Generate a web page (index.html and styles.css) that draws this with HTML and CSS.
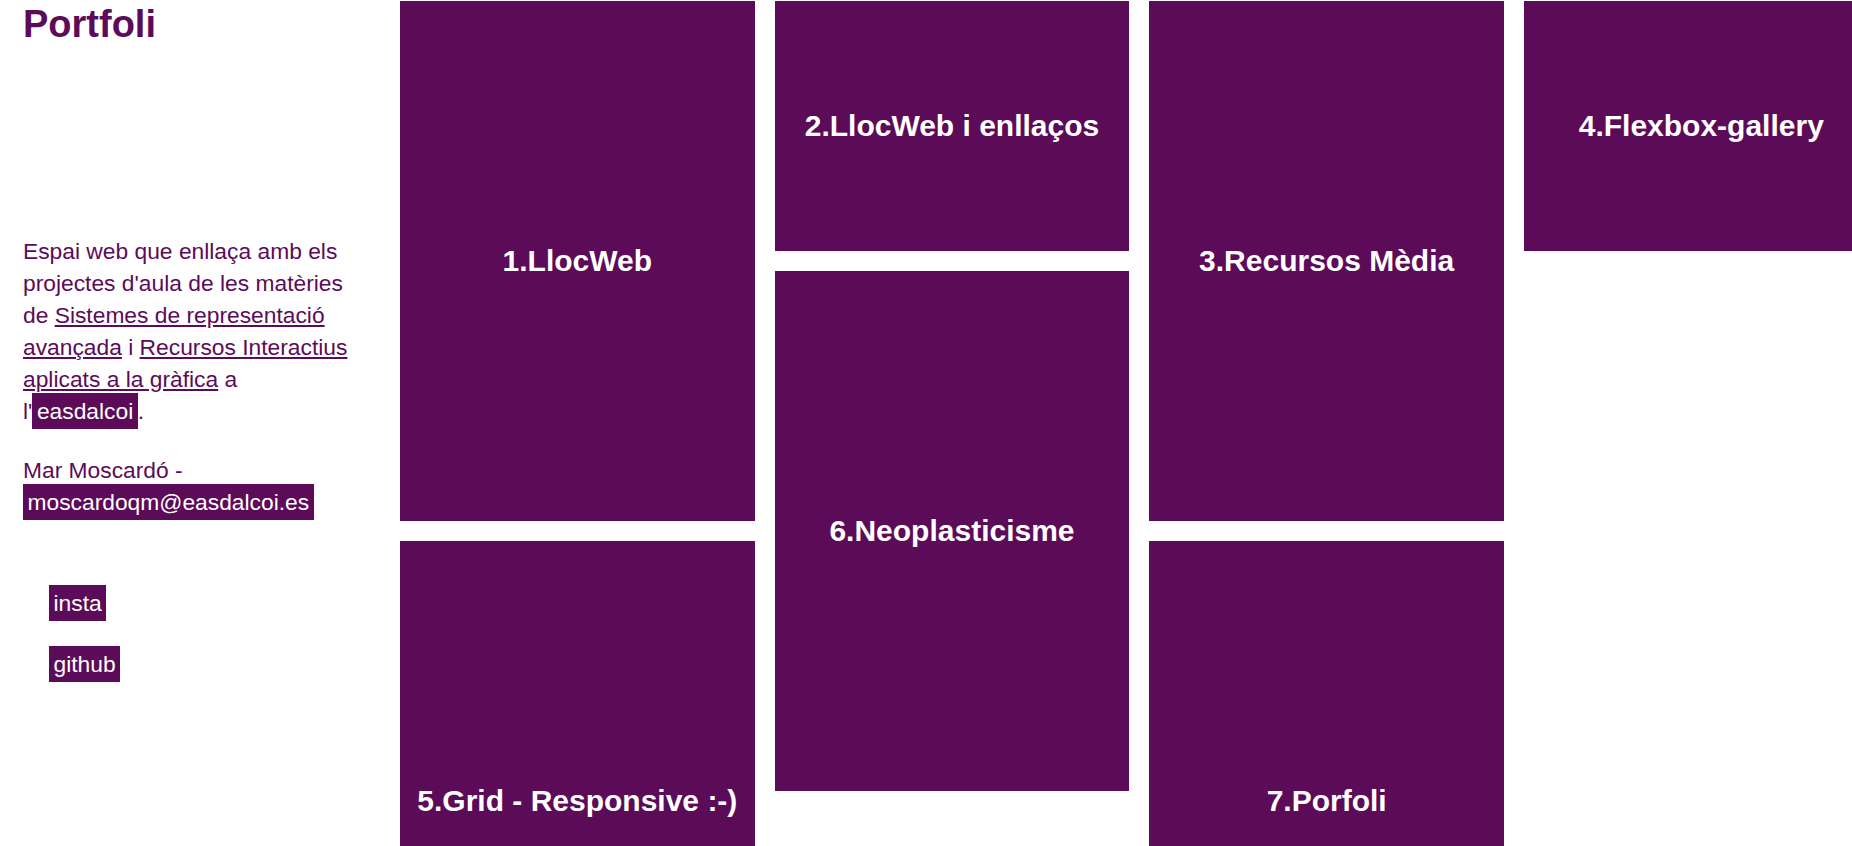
FILE: index.html
```html
<!DOCTYPE html>
<html lang="ca">
<head>
  <meta charset="UTF-8">
  <meta name="viewport" content="width=device-width, initial-scale=1.0">
  <title>Portfoli</title>
  <link rel="stylesheet" href="styles.css">
</head>
<body>
  <div class="page">
    <!-- Sidebar -->
    <aside class="sidebar">
      <h1>Portfoli</h1>
      <p class="intro">
        Espai web que enllaça amb els projectes d'aula de les matèries de
        <a href="#">Sistemes de representació avançada</a> i
        <a href="#">Recursos Interactius aplicats a la gràfica</a> a
        l'<a class="tag" href="#">easdalcoi</a>.
      </p>
      <p class="author">
        Mar Moscardó - <a class="tag" href="#">moscardoqm@easdalcoi.es</a>
      </p>
      <ul class="social">
        <li><a class="tag" href="#">insta</a></li>
        <li><a class="tag" href="#">github</a></li>
      </ul>
    </aside>

    <!-- Gallery -->
    <main class="gallery">
      <a class="tile tile-1" href="#">1.LlocWeb</a>
      <a class="tile tile-2" href="#">2.LlocWeb i enllaços</a>
      <a class="tile tile-3" href="#">3.Recursos Mèdia</a>
      <a class="tile tile-4" href="#">4.Flexbox-gallery</a>
      <a class="tile tile-5" href="#">5.Grid - Responsive :-)</a>
      <a class="tile tile-6" href="#">6.Neoplasticisme</a>
      <a class="tile tile-7" href="#">7.Porfoli</a>
    </main>
  </div>
</body>
</html>
```

FILE: styles.css
```css
body {
  margin: 0;
  font-family: "Liberation Sans", Arial, sans-serif;
  color: #5c0b59;
  background: #fff;
}
.page {
  display: flex;
  align-items: flex-start;
}
.sidebar {
  flex: 0 0 400px;
  box-sizing: border-box;
  padding: 0 40px 0 23px;
}
h1 {
  margin: 2.6px 0 0;
  font-size: 38px;
  font-weight: bold;
}
.intro, .author {
  font-size: 22.8px;
  line-height: 32px;
}
.intro {
  margin: 189px 0 0;
}
.author {
  margin: 27px 0 0;
}
a {
  color: #5c0b59;
}
.tag {
  background-color: #5c0b59;
  color: #fff;
  text-decoration: none;
  padding: 5px 4.5px;
}
.social {
  list-style: none;
  margin: 69px 0 0;
  padding: 0 0 0 26px;
  display: flex;
  flex-direction: column;
  align-items: flex-start;
  gap: 29px;
  font-size: 22.8px;
  line-height: 32px;
}
.gallery {
  flex: none;
  display: grid;
  grid-template-columns: repeat(4, 354.67px);
  grid-auto-rows: 250px;
  gap: 20px;
  padding-top: 1px;
}
.tile {
  display: flex;
  align-items: center;
  justify-content: center;
  text-align: center;
  background-color: #5c0b59;
  color: #fff;
  font-size: 30px;
  font-weight: bold;
  text-decoration: none;
}
.tile-1 { grid-column: 1; grid-row: 1 / span 2; }
.tile-2 { grid-column: 2; grid-row: 1; }
.tile-3 { grid-column: 3; grid-row: 1 / span 2; }
.tile-4 { grid-column: 4; grid-row: 1; }
.tile-5 { grid-column: 1; grid-row: 3 / span 2; }
.tile-6 { grid-column: 2; grid-row: 2 / span 2; }
.tile-7 { grid-column: 3; grid-row: 3 / span 2; }
```
